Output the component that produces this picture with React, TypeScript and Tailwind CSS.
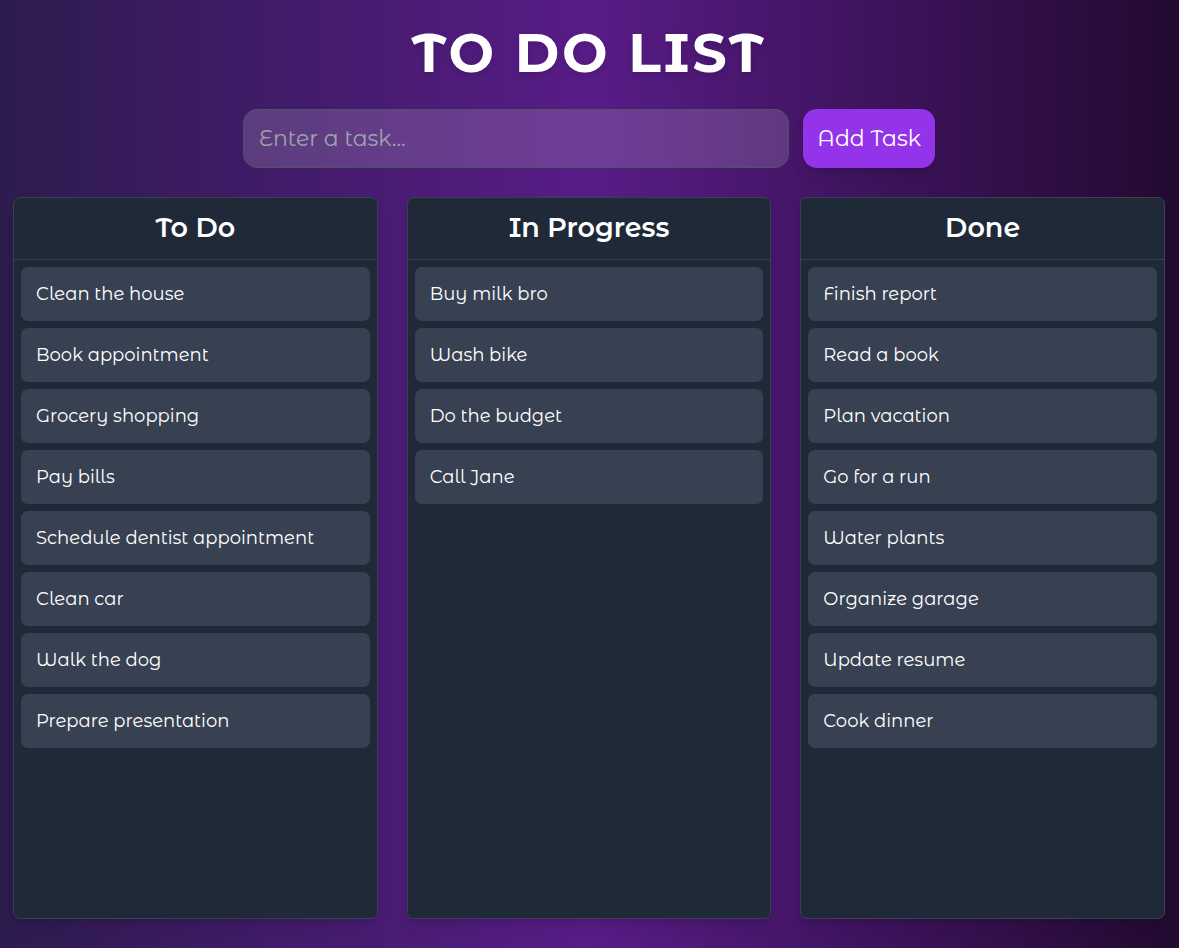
import { useState, type FormEvent } from "react";

type Column = { title: string; tasks: string[] };

const initialColumns: Column[] = [
  {
    title: "To Do",
    tasks: [
      "Clean the house",
      "Book appointment",
      "Grocery shopping",
      "Pay bills",
      "Schedule dentist appointment",
      "Clean car",
      "Walk the dog",
      "Prepare presentation",
    ],
  },
  {
    title: "In Progress",
    tasks: ["Buy milk bro", "Wash bike", "Do the budget", "Call Jane"],
  },
  {
    title: "Done",
    tasks: [
      "Finish report",
      "Read a book",
      "Plan vacation",
      "Go for a run",
      "Water plants",
      "Organize garage",
      "Update resume",
      "Cook dinner",
    ],
  },
];

function TaskColumn({ title, tasks }: Column) {
  return (
    <section className="flex flex-col rounded-[7px] border border-[#374151] bg-[#1f2937] shadow-lg">
      <h2 className="border-b border-[#374151] pt-3 pb-[13px] text-center text-[27px] leading-9 font-semibold">
        {title}
      </h2>
      <ul className="flex flex-col gap-[7px] p-[7px]">
        {tasks.map((task) => (
          <li
            key={task}
            className="rounded-[7px] bg-[#374151] px-[15px] py-[14px] text-[18px] leading-[26px]"
          >
            {task}
          </li>
        ))}
      </ul>
    </section>
  );
}

export default function App() {
  const [columns, setColumns] = useState(initialColumns);
  const [draft, setDraft] = useState("");

  function addTask(event: FormEvent) {
    event.preventDefault();
    const task = draft.trim();
    if (!task) return;
    setColumns(([todo, ...rest]) => [{ ...todo, tasks: [...todo.tasks, task] }, ...rest]);
    setDraft("");
  }

  return (
    <main className="flex min-h-screen flex-col bg-linear-to-r/srgb from-[#2d1b4e] via-[#581c87] to-[#220a30] pt-[25px] pr-[14px] pb-[29px] pl-[13px] font-['Montserrat_Alternates',Inter,sans-serif] text-white">
      <h1 className="text-center text-[54px] leading-[56px] font-bold tracking-wider drop-shadow-md">
        TO DO LIST
      </h1>
      <form onSubmit={addTask} className="mx-auto mt-7 flex w-full max-w-[692px] gap-[14px]">
        <input
          type="text"
          aria-label="Task"
          placeholder="Enter a task..."
          value={draft}
          onChange={(event) => setDraft(event.target.value)}
          className="h-[59px] min-w-0 flex-1 rounded-[14px] border border-[#4b5563] bg-white/15 px-[15px] text-[22px] placeholder:text-[#9ca3af] focus:outline-none"
        />
        <button
          type="submit"
          className="h-[59px] rounded-[14px] bg-[#9333ea] px-[14px] text-[22px] whitespace-nowrap shadow-lg"
        >
          Add Task
        </button>
      </form>
      <div className="mt-[29px] grid flex-1 grid-cols-3 gap-[29px]">
        {columns.map((column) => (
          <TaskColumn key={column.title} {...column} />
        ))}
      </div>
    </main>
  );
}
